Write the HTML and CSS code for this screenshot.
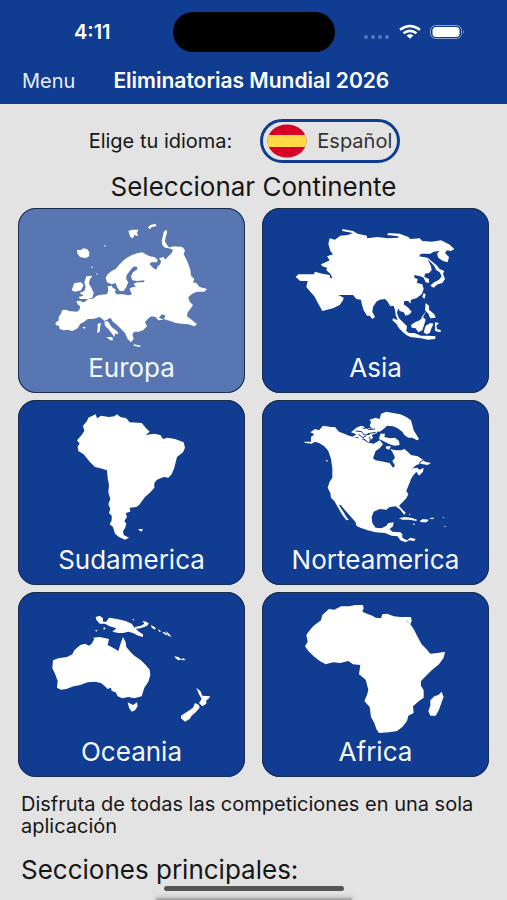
FILE: index.html
```html
<!DOCTYPE html>
<html lang="es">
<head>
<meta charset="utf-8">
<meta name="viewport" content="width=device-width, initial-scale=1">
<title>Eliminatorias Mundial 2026</title>
<link rel="stylesheet" href="styles.css">
</head>
<body>
<header class="header">
  <div class="status">
    <span class="status-time">4:11</span>
    <span class="island"></span>
    <svg class="status-icons" viewBox="0 0 102 18" aria-hidden="true">
      <g fill="#5479bb"><circle cx="3" cy="14" r="2"/><circle cx="10" cy="14" r="2"/><circle cx="17" cy="14" r="2"/><circle cx="24" cy="14" r="2"/></g>
      <g fill="none" stroke="#fff" stroke-width="2.600"><path d="M37 6.800Q47 -0.800 57 6.800"/><path d="M40.500 10.300Q47 5.300 53.500 10.300"/></g>
      <path d="M43.500 12.600Q47 9.800 50.500 12.600L47 15.800Z" fill="#fff"/>
      <rect x="67.500" y="2.500" width="31" height="13" rx="5" fill="none" stroke="#8ba4d3"/>
      <rect x="69.500" y="4" width="27" height="10" rx="3.500" fill="#fff"/>
      <path d="M100 7Q101.700 9 100 11Z" fill="#8ba4d3"/>
    </svg>
  </div>
  <nav class="navbar">
    <button class="menu" type="button">Menu</button>
    <h1 class="title">Eliminatorias Mundial 2026</h1>
  </nav>
</header>

<main class="main">
  <div class="language">
    <label class="language-label" for="lang">Elige tu idioma:</label>
    <div class="picker">
      <svg class="flag" viewBox="0 0 40 34" preserveAspectRatio="none" aria-hidden="true">
        <clipPath id="oval"><ellipse cx="20" cy="17" rx="19.500" ry="16.500"/></clipPath>
        <g clip-path="url(#oval)"><path fill="#d80027" d="M0 0h40v34H0z"/><path fill="#ffda44" d="M0 11h40v12H0z"/></g>
      </svg>
      <select class="select" id="lang"><option>Español</option></select>
    </div>
  </div>

  <h2 class="heading">Seleccionar Continente</h2>

  <div class="grid">
    <button class="card card-active" type="button">
      <svg class="map" viewBox="3 3 681 432" aria-hidden="true">
        <path d="M135 310L148 308 155 312 180 314 187 309 190 298 183 293 178 283 190 281 196 286 204 284 214 275 228 275 238 267 250 263 270 262 274 250 272 238 284 236 288 244 296 246 290 254 300 262 318 262 334 265 345 262 340 252 338 244 348 240 356 240 350 230 360 226 380 226 383 220 360 222 346 220 342 208 348 196 362 186 358 178 348 180 338 192 328 206 328 218 334 226 328 240 320 252 308 252 300 240 296 228 284 232 270 226 266 212 272 202 284 192 296 186 308 172 320 160 330 152 345 144 362 138 376 136 386 142 398 148 412 150 422 158 420 166 402 166 398 172 408 182 418 188 422 178 430 172 432 162 426 154 440 150 444 158 452 150 464 138 468 128 452 122 472 118 496 120 504 130 500 142 512 166 520 188 522 206 532 216 528 226 538 228 548 240 570 246 562 254 540 254 526 260 514 270 518 284 528 294 520 306 512 316 510 328 524 338 540 352 532 358 514 352 494 350 476 348 460 342 440 336 446 326 434 322 426 332 440 338 424 340 416 330 404 328 394 334 384 346 390 358 378 370 366 374 352 374 346 382 350 396 342 406 332 396 324 378 310 364 298 352 288 344 280 332 270 338 262 342 256 336 248 330 236 334 226 336 212 336 202 344 190 350 182 364 166 372 152 368 140 370 128 366 126 356 116 354 116 346 124 342 126 328 132 320Z"/>
        <path d="M262 344L272 342 284 360 302 374 304 382 294 380 292 390 286 382 274 366 264 356ZM268 390L286 390 288 400 280 400ZM350 412L372 416 368 420 350 416ZM242 350L252 348 250 356 248 374 240 378 242 364ZM196 360h10l-4 6zM180 128L190 130 200 124 210 126 217 136 216 148 206 154 190 150 182 142ZM334 72L346 68 364 68 360 78 364 88 352 84 348 94 340 90ZM392 62L400 54 416 50 418 58 404 60 400 66ZM440 74L450 68 450 78 446 90 444 104 452 116 458 124 444 122 436 114 434 100 438 86ZM166 244L172 228 192 226 200 234 192 250 174 254 164 250ZM208 208L226 206 218 218 216 230 224 244 230 258 226 272 210 276 190 276 184 270 200 266 188 258 202 252 206 240 202 226ZM284 248L296 248 294 258 286 258ZM262 114l5 2-4 4zM222 178l7 4-5 2zM238 198l5 4-4 2z"/>
      </svg>
      <span class="card-label">Europa</span>
    </button>

    <button class="card" type="button">
      <svg class="map" viewBox="3 3 681 432" aria-hidden="true">
        <path d="M104 210L112 202 132 202 158 202 162 194 184 200 206 204 208 214 214 212 208 200 196 190 198 182 184 178 180 172 194 166 206 160 198 148 216 142 208 132 202 110 206 94 222 98 238 86 260 84 276 78 244 72 244 66 276 72 290 80 318 86 318 94 350 90 380 94 412 92 412 88 378 84 382 78 416 80 442 90 448 96 476 94 484 102 512 104 540 100 564 112 580 126 570 132 558 130 552 138 564 150 560 166 546 162 532 152 528 140 536 132 518 134 508 140 480 140 474 148 500 152 514 164 526 174 536 186 550 192 546 200 552 216 544 228 530 232 518 242 508 236 516 228 534 218 542 208 536 196 526 190 520 178 508 164 500 156 510 178 512 190 504 198 492 200 490 210 504 216 504 228 494 226 488 212 478 208 460 204 460 212 470 216 468 228 484 232 488 246 482 262 466 274 450 278 448 290 442 282 430 282 428 292 442 302 452 314 446 322 434 326 428 316 416 312 412 304 408 318 414 334 426 346 438 358 436 372 444 378 460 378 480 386 502 386 524 388 522 396 500 398 480 394 448 390 436 384 426 376 414 364 406 350 394 340 396 334 410 340 404 324 402 310 398 296 388 298 380 284 372 276 356 278 346 284 336 300 334 314 342 330 334 336 326 326 318 326 308 310 302 290 300 278 286 276 276 264 252 264 232 264 248 272 246 280 236 294 216 304 184 312 172 290 160 268 146 252 136 240 140 222 118 222Z"/>
        <path d="M488 258L494 262 490 276 484 270ZM494 288L504 296 504 308 520 322 524 332 508 334 502 320 492 310ZM450 354L462 346 476 340 486 330 494 338 490 352 484 370 472 376 464 364 452 362ZM494 356L508 348 518 350 512 362 506 378 496 382 488 376ZM522 346L534 348 526 356 528 366 540 370 538 376 522 372ZM496 312L486 330 480 332Z"/>
      </svg>
      <span class="card-label">Asia</span>
    </button>

    <button class="card" type="button">
      <svg class="map" viewBox="3 3 681 432" aria-hidden="true">
        <path d="M198 80L210 66 214 56 236 46 240 58 252 50 276 54 292 52 300 46 310 54 328 58 338 70 374 72 386 86 398 98 386 108 412 104 430 108 438 120 452 116 474 120 500 130 504 146 498 160 480 174 476 190 472 206 464 226 454 236 440 234 420 242 412 252 412 266 400 280 384 294 366 318 358 324 338 326 340 338 326 342 330 354 322 366 328 374 324 388 318 396 320 408 336 416 324 422 306 414 294 404 288 384 278 376 284 364 284 350 276 342 280 330 274 316 280 300 274 280 276 258 272 238 270 214 250 208 234 204 218 188 200 166 184 156 182 142 188 134 180 124 194 108 202 96Z"/><path d="M364 390L378 390 374 398 366 394Z"/>
      </svg>
      <span class="card-label">Sudamerica</span>
    </button>

    <button class="card" type="button">
      <svg class="map" viewBox="3 3 681 432" aria-hidden="true">
        <path d="M128 128L150 128 150 114 160 106 148 100 162 90 174 94 186 80 210 84 222 84 234 98 250 104 264 110 286 116 308 122 318 130 338 134 356 124 366 136 356 148 344 156 336 178 344 184 368 188 386 192 396 206 402 200 394 186 402 176 396 162 388 150 404 154 420 154 430 150 440 158 450 168 470 172 486 182 492 188 510 192 500 198 478 194 466 198 456 206 448 214 456 208 468 206 476 212 488 206 486 218 474 230 466 218 456 230 450 240 444 256 436 276 442 286 436 298 426 308 414 320 428 336 434 340 430 348 418 332 404 322 386 324 376 332 356 330 338 338 332 354 334 372 344 386 362 388 376 380 382 372 398 370 396 382 386 390 394 398 418 400 424 406 424 416 438 424 448 416 464 420 460 426 444 424 434 430 418 424 410 412 392 410 372 402 344 400 320 394 298 386 286 380 284 370 268 352 256 338 242 322 240 318 234 318 244 334 258 356 264 362 256 364 244 348 230 324 220 306 210 296 208 282 200 266 206 248 214 236 214 208 210 180 202 156 190 142 174 132 162 128 152 134 134 132Z"/>
        <path d="M360 44L376 38 396 42 418 46 436 54 450 64 454 78 458 94 474 120 468 124 454 116 442 116 430 108 424 98 410 88 396 82 378 80 368 90 356 98 342 96 332 88 326 80 330 70 326 62 344 56 356 60ZM286 86L300 80 312 84 304 90 324 88 350 94 348 102 332 108 336 116 322 130 308 118 298 124 290 114 274 114 286 106 270 100ZM358 104L372 104 370 114 388 118 402 116 414 126 416 138 400 140 386 136 374 130 354 120ZM376 142L390 142 384 152 374 148ZM414 358L430 354 450 356 468 362 466 366 446 362 424 362ZM476 366L486 360 504 362 496 370 480 370ZM508 356h12l-4 4h-8zM544 356l5-2v4zM550 380l5 2-4 3zM454 374h9l-4 4zM444 344l5 2-4 3zM194 182l6 2-2 6z"/>
        <g fill="none" stroke="#103c91" stroke-width="3"><path d="M284 96L302 98 310 108 326 106M312 78L322 92 342 90M320 104L344 100M292 106L306 116 316 110M326 114L328 126M492 180L476 190 478 202"/></g>
      </svg>
      <span class="card-label">Norteamerica</span>
    </button>

    <button class="card" type="button">
      <svg class="map" viewBox="3 3 681 432" aria-hidden="true">
        <path d="M108 208L124 202 150 198 166 190 172 178 190 162 204 158 216 164 224 158 232 144 228 140 248 138 276 144 272 162 288 170 304 180 310 160 318 138 326 154 328 168 340 182 352 194 370 206 384 220 398 236 400 252 394 272 382 290 374 316 352 322 334 318 316 322 302 316 296 304 284 300 282 290 272 294 266 288 252 276 234 272 212 274 190 282 170 286 148 294 132 296 120 290 122 270 114 248 106 232Z"/>
        <path d="M332 334L348 342 360 334 362 346 354 358 344 362 336 350ZM236 78L248 74 258 82 258 92 268 92 276 80 300 84 326 90 344 98 354 112 366 122 378 130 378 138 364 134 348 126 334 122 318 126 304 126 286 122 298 112 278 106 264 98 248 98 238 86ZM354 108L372 104 382 98 376 90 388 92 396 98 388 106 370 112 354 114ZM402 102L416 110 414 116 404 110ZM422 114L432 120 428 124ZM436 122L448 126 452 134 440 128ZM446 120L456 128 464 138 454 134ZM472 196L484 198 494 206 484 208 476 202ZM492 204l8-2 6 5-9 1zM346 84l7 2-4 3zM260 108l6 4-6 6zM234 118l8-2-4 6zM538 290L550 300 556 314 580 316 574 324 568 328 568 338 556 346 546 336 554 324 546 310ZM534 336L546 342 548 350 536 364 524 374 518 384 504 392 492 382 492 374 514 360 528 350Z"/>
      </svg>
      <span class="card-label">Oceania</span>
    </button>

    <button class="card" type="button">
      <svg class="map" viewBox="3 3 681 432" aria-hidden="true">
        <path d="M204 54L220 56 240 46 264 46 284 42 306 42 308 52 304 62 318 68 334 74 344 80 360 82 364 70 378 68 398 76 418 78 450 78 452 90 448 100 458 114 470 138 482 160 496 174 508 188 530 186 552 182 548 200 534 220 512 238 494 256 480 270 480 284 488 298 488 320 474 330 456 346 458 366 442 374 438 390 424 408 408 420 384 424 354 426 346 414 340 396 330 378 326 348 310 330 318 312 322 296 314 266 294 250 298 222 276 220 262 210 238 216 216 214 194 220 176 210 158 196 142 180 132 166 140 152 136 132 146 118 158 104 180 88 184 72Z"/>
        <path d="M542 302L548 318 544 328 534 356 524 374 508 374 502 360 508 344 508 328 520 316 532 312Z"/>
        <path d="M436 88L444 98" fill="none" stroke="#7e96c5" stroke-width="2"/>
      </svg>
      <span class="card-label">Africa</span>
    </button>
  </div>

  <p class="text">Disfruta de todas las competiciones en una sola aplicación</p>
  <h2 class="subheading">Secciones principales:</h2>
</main>
<div class="bottom"><span class="sheet"></span><span class="home"></span></div>
</body>
</html>
```
FILE: styles.css
```css
* { box-sizing: border-box; }
html { height: 100%; }
body {
  min-height: 100%;
  margin: 0;
  overflow: hidden;
  background: #e3e3e3;
  color: #161616;
  font-family: Inter, "Liberation Sans", sans-serif;
}
button, select { font: inherit; }
h1, h2, p { margin: 0; font-weight: 400; }

.header {
  padding-top: 12px;
  background: #103c91;
  color: #fff;
}
.status {
  display: grid;
  grid-template-columns: 1fr 162px 1fr;
  align-items: center;
}
.status-time {
  padding-left: 12px;
  font-size: 20px;
  font-weight: 600;
  line-height: 24px;
  text-align: center;
}
.island {
  height: 40px;
  border-radius: 20px;
  background: #000;
}
.status-icons {
  width: 102px;
  height: 18px;
  margin-left: 28px;
}
.navbar {
  display: flex;
  align-items: center;
  gap: 38px;
  height: 52px;
  padding: 6px 22px 0;
}
.menu {
  padding: 0;
  border: 0;
  background: none;
  color: #e6edfb;
  font-size: 20px;
  line-height: 24px;
}
.title {
  font-size: 21px;
  font-weight: 600;
  line-height: 24px;
  white-space: nowrap;
}

.main { padding: 15px 18px 0; }
.language {
  display: flex;
  align-items: center;
  justify-content: center;
  gap: 28px;
  padding-right: 18px;
}
.language-label {
  font-size: 20px;
  line-height: 24px;
}
.picker {
  display: flex;
  align-items: center;
  gap: 10px;
  height: 44px;
  padding: 0 5px 0 4px;
  border: 3px solid #103c91;
  border-radius: 22px;
}
.flag {
  flex: none;
  width: 40px;
  height: 34px;
}
.select {
  padding: 0;
  border: 0;
  appearance: none;
  background: none;
  color: #333;
  font-size: 20px;
  line-height: 24px;
}
.heading {
  padding: 9px 0 6px;
  font-size: 26px;
  line-height: 30px;
  text-align: center;
}

.grid {
  display: grid;
  grid-template-columns: 1fr 1fr;
  gap: 7px 17px;
}
.card {
  display: flex;
  flex-direction: column;
  padding: 0 0 9px;
  border: 0;
  border-radius: 18px;
  background: #103c91;
  box-shadow: inset 0 0 0 1px #1c2c4c;
  color: #f4f8ff;
  font-size: 26px;
}
.card-active { background: #5876b1; }
.map {
  display: block;
  width: 100%;
  fill: #fff;
}
.card-label {
  width: 100%;
  line-height: 32px;
  text-align: center;
}

.text {
  padding: 16px 0 0 3px;
  font-size: 20px;
  line-height: 22px;
}
.subheading {
  padding: 18px 0 0 3px;
  font-size: 26px;
  line-height: 30px;
}

.bottom {
  position: fixed;
  right: 0;
  bottom: 0;
  left: 0;
  display: flex;
  flex-direction: column-reverse;
  align-items: center;
  height: 14px;
  overflow: hidden;
}
.sheet {
  flex: none;
  width: 196px;
  height: 2px;
  border-radius: 2px;
  background: #aaa;
  box-shadow: 0 0 4px 1px #b4b4b4;
}
.home {
  flex: none;
  width: 180px;
  height: 5px;
  margin-bottom: 7px;
  border-radius: 3px;
  background: #555;
}
```
